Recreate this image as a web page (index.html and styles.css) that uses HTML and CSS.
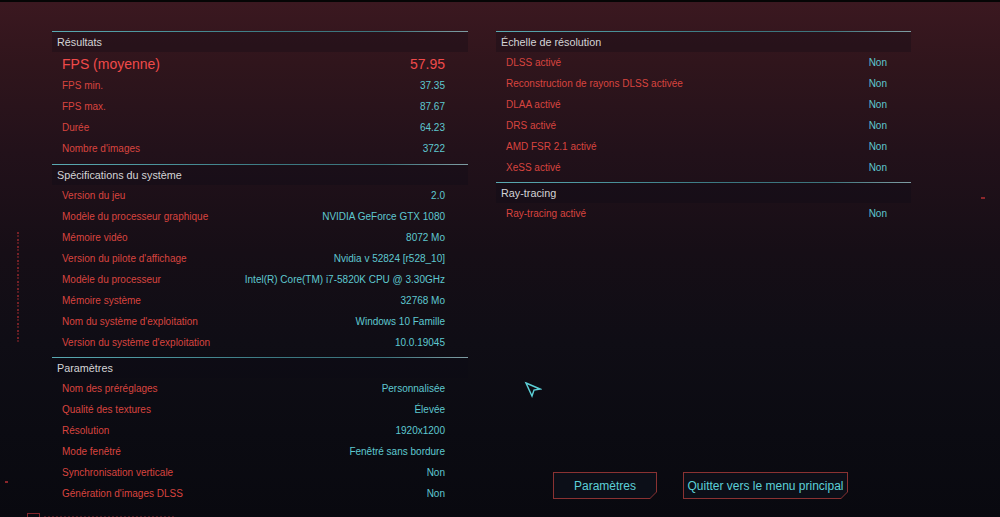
FILE: index.html
```html
<!DOCTYPE html>
<html lang="fr">
<head>
<meta charset="utf-8">
<title>Résultats du benchmark</title>
<link rel="stylesheet" href="styles.css">
</head>
<body>
<div class="screen">
  <div class="col col-left">
    <section class="sec sec-results">
      <div class="sec-head">Résultats</div>
      <div class="row row-big"><span class="k">FPS (moyenne)</span><span class="v">57.95</span></div>
      <div class="row"><span class="k">FPS min.</span><span class="v">37.35</span></div>
      <div class="row"><span class="k">FPS max.</span><span class="v">87.67</span></div>
      <div class="row"><span class="k">Durée</span><span class="v">64.23</span></div>
      <div class="row"><span class="k">Nombre d'images</span><span class="v">3722</span></div>
    </section>
    <section class="sec">
      <div class="sec-head">Spécifications du système</div>
      <div class="row"><span class="k">Version du jeu</span><span class="v">2.0</span></div>
      <div class="row"><span class="k">Modèle du processeur graphique</span><span class="v">NVIDIA GeForce GTX 1080</span></div>
      <div class="row"><span class="k">Mémoire vidéo</span><span class="v">8072 Mo</span></div>
      <div class="row"><span class="k">Version du pilote d'affichage</span><span class="v">Nvidia v 52824 [r528_10]</span></div>
      <div class="row"><span class="k">Modèle du processeur</span><span class="v">Intel(R) Core(TM) i7-5820K CPU @ 3.30GHz</span></div>
      <div class="row"><span class="k">Mémoire système</span><span class="v">32768 Mo</span></div>
      <div class="row"><span class="k">Nom du système d'exploitation</span><span class="v">Windows 10 Famille</span></div>
      <div class="row"><span class="k">Version du système d'exploitation</span><span class="v">10.0.19045</span></div>
    </section>
    <section class="sec sec-last">
      <div class="sec-head">Paramètres</div>
      <div class="row"><span class="k">Nom des préréglages</span><span class="v">Personnalisée</span></div>
      <div class="row"><span class="k">Qualité des textures</span><span class="v">Élevée</span></div>
      <div class="row"><span class="k">Résolution</span><span class="v">1920x1200</span></div>
      <div class="row"><span class="k">Mode fenêtré</span><span class="v">Fenêtré sans bordure</span></div>
      <div class="row"><span class="k">Synchronisation verticale</span><span class="v">Non</span></div>
      <div class="row"><span class="k">Génération d'images DLSS</span><span class="v">Non</span></div>
    </section>
  </div>
  <div class="col col-right">
    <section class="sec">
      <div class="sec-head">Échelle de résolution</div>
      <div class="row"><span class="k">DLSS activé</span><span class="v">Non</span></div>
      <div class="row"><span class="k">Reconstruction de rayons DLSS activée</span><span class="v">Non</span></div>
      <div class="row"><span class="k">DLAA activé</span><span class="v">Non</span></div>
      <div class="row"><span class="k">DRS activé</span><span class="v">Non</span></div>
      <div class="row"><span class="k">AMD FSR 2.1 activé</span><span class="v">Non</span></div>
      <div class="row"><span class="k">XeSS activé</span><span class="v">Non</span></div>
    </section>
    <section class="sec">
      <div class="sec-head">Ray-tracing</div>
      <div class="row"><span class="k">Ray-tracing activé</span><span class="v">Non</span></div>
    </section>
    <div class="actions">
      <button class="btn btn-settings"><span>Paramètres</span></button>
      <button class="btn btn-quit"><span>Quitter vers le menu principal</span></button>
    </div>
  </div>

  <div class="deco-vert"></div>
  <div class="deco-dot deco-dot-a"></div>
  <div class="deco-dot deco-dot-b"></div>
  <div class="deco-box"></div>
  <div class="deco-dots"></div>
  <svg class="cursor" width="18" height="18" viewBox="0 0 18 18">
    <polygon points="2,2 16,8 10,9 8,15" fill="none" stroke="#5ccfd6" stroke-width="1.4" stroke-linejoin="miter"/>
  </svg>
</div>
</body>
</html>
```

FILE: styles.css
```css
* { box-sizing: border-box; }
html, body { margin: 0; padding: 0; }
body {
  width: 1000px;
  height: 517px;
  overflow: hidden;
  background: #0a0a10;
  font-family: "Liberation Sans", Arial, sans-serif;
}
.screen {
  position: relative;
  width: 1000px;
  height: 517px;
  display: flex;
  gap: 28px;
  padding: 31px 0 12px 52px;
  border-top: 2px solid #050505;
  background: linear-gradient(180deg, #3b1820 0px, #30151c 60px, #22111a 150px, #160e16 250px, #0f0d15 340px, #0b0b12 430px, #09090f 517px);
}
.col { display: flex; flex-direction: column; }
.col-left { width: 416px; margin-top: -2px; }
.col-right { width: 415px; margin-top: -2px; }

.sec { padding-bottom: 4px; }
.sec-results { padding-bottom: 5px; }
.sec-last { padding-bottom: 0; }
.sec::before {
  content: "";
  display: block;
  height: 1px;
  background: linear-gradient(90deg, #5aaab2 0%, #4b939b 25%, #3b7780 55%, #3d747c 80%, #7f9da3 100%);
}
.sec-head {
  height: 20px;
  line-height: 20px;
  padding-left: 5px;
  font-size: 10.8px;
  color: #d4d4d6;
  background: rgba(12, 10, 20, 0.28);
}
.row {
  height: 21px;
  display: flex;
  align-items: center;
  justify-content: space-between;
  padding: 0 23px 0 10px;
  font-size: 10px;
}
.row .k { color: #d8443f; }
.row .v { color: #5ec8d0; }
.row-big { height: 23px; font-size: 14px; }
.row-big .k, .row-big .v { color: #ef4a4a; }

.col-right .row { padding-right: 24px; }

.actions {
  margin-top: auto;
  margin-bottom: 6px;
  display: flex;
  gap: 26px;
  padding-left: 57px;
}
.btn {
  position: relative;
  height: 27px;
  border: 0;
  padding: 0;
  font-family: "Liberation Sans", Arial, sans-serif;
  font-size: 12px;
  color: #5ccfd7;
  background: #8a3232;
  clip-path: polygon(0 0, 100% 0, 100% calc(100% - 7px), calc(100% - 7px) 100%, 0 100%);
}
.btn::before {
  content: "";
  position: absolute;
  inset: 1px;
  background: #0c0f18;
  clip-path: polygon(0 0, 100% 0, 100% calc(100% - 6px), calc(100% - 6px) 100%, 0 100%);
}
.btn span { position: relative; }
.btn-settings { width: 104px; }
.btn-quit { width: 165px; }

.deco-vert {
  position: absolute;
  left: 17px;
  top: 230px;
  width: 2px;
  height: 110px;
  background: repeating-linear-gradient(180deg, rgba(150, 40, 45, 0.75) 0 2px, transparent 2px 3px, rgba(150, 40, 45, 0.5) 3px 5px, transparent 5px 7px);
}
.deco-dot {
  position: absolute;
  width: 3px;
  height: 2px;
  background: rgba(170, 45, 50, 0.8);
}
.deco-dot-a { left: 5px; top: 479px; }
.deco-dot-b { left: 981px; top: 195px; width: 4px; }
.deco-box {
  position: absolute;
  left: 27px;
  top: 511px;
  width: 13px;
  height: 8px;
  border: 1px solid rgba(160, 45, 50, 0.8);
}
.deco-dots {
  position: absolute;
  left: 44px;
  top: 514px;
  width: 130px;
  height: 2px;
  background: repeating-linear-gradient(90deg, rgba(140, 40, 45, 0.5) 0 2px, transparent 2px 4px);
}
.cursor {
  position: absolute;
  left: 524px;
  top: 379px;
}
```
